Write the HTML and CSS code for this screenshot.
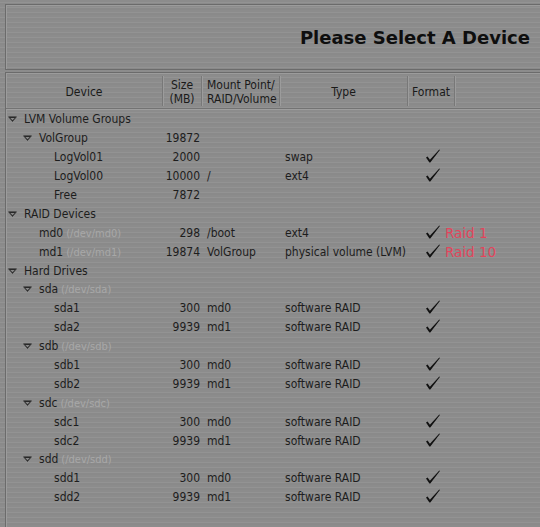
FILE: index.html
```html
<!DOCTYPE html>
<html>
<head>
<meta charset="utf-8">
<link rel="stylesheet" href="styles.css">
</head>
<body>
<div class="screen">
  <div class="title-panel">
    <h1 class="title">Please Select A Device</h1>
  </div>
  <div class="tree-panel">
    <div class="head">
      <div class="hcell">Device</div>
      <div class="hcell">Size<br>(MB)</div>
      <div class="hcell left">Mount Point/<br>RAID/Volume</div>
      <div class="hcell">Type</div>
      <div class="hcell">Format</div>
      <div class="hcell last"></div>
    </div>
    <div class="rows">
      <div class="row"><div class="dev l0"><span class="exp"><svg width="9" height="6" viewBox="0 0 9 6"><path d="M0.5 0.8 H8.5 L4.5 5.5 Z" fill="#2a2a2a" stroke="#2a2a2a" stroke-width="0.6"/><path d="M2.4 1.9 H6.6 L4.5 4.3 Z" fill="#8a8a8a"/></svg></span>LVM Volume Groups</div><div class="size"></div><div class="mnt"></div><div class="type"></div><div class="fmt"></div></div>
      <div class="row"><div class="dev l1"><span class="exp"><svg width="9" height="6" viewBox="0 0 9 6"><path d="M0.5 0.8 H8.5 L4.5 5.5 Z" fill="#2a2a2a" stroke="#2a2a2a" stroke-width="0.6"/><path d="M2.4 1.9 H6.6 L4.5 4.3 Z" fill="#8a8a8a"/></svg></span>VolGroup</div><div class="size">19872</div><div class="mnt"></div><div class="type"></div><div class="fmt"></div></div>
      <div class="row"><div class="dev l2"><span class="exp"></span>LogVol01</div><div class="size">2000</div><div class="mnt"></div><div class="type">swap</div><div class="fmt"><svg class="chk" width="16" height="14" viewBox="0 0 16 14"><path d="M1 8.4 L2.6 7.4 L4.9 10.8 L14.3 0.6 L14.9 1.1 L5.3 13.4 L4.4 13.4 Z" fill="#111"/></svg></div></div>
      <div class="row"><div class="dev l2"><span class="exp"></span>LogVol00</div><div class="size">10000</div><div class="mnt">/</div><div class="type">ext4</div><div class="fmt"><svg class="chk" width="16" height="14" viewBox="0 0 16 14"><path d="M1 8.4 L2.6 7.4 L4.9 10.8 L14.3 0.6 L14.9 1.1 L5.3 13.4 L4.4 13.4 Z" fill="#111"/></svg></div></div>
      <div class="row"><div class="dev l2"><span class="exp"></span>Free</div><div class="size">7872</div><div class="mnt"></div><div class="type"></div><div class="fmt"></div></div>
      <div class="row"><div class="dev l0"><span class="exp"><svg width="9" height="6" viewBox="0 0 9 6"><path d="M0.5 0.8 H8.5 L4.5 5.5 Z" fill="#2a2a2a" stroke="#2a2a2a" stroke-width="0.6"/><path d="M2.4 1.9 H6.6 L4.5 4.3 Z" fill="#8a8a8a"/></svg></span>RAID Devices</div><div class="size"></div><div class="mnt"></div><div class="type"></div><div class="fmt"></div></div>
      <div class="row"><div class="dev l1"><span class="exp"></span>md0<span class="path">(/dev/md0)</span></div><div class="size">298</div><div class="mnt">/boot</div><div class="type">ext4</div><div class="fmt"><svg class="chk" width="16" height="14" viewBox="0 0 16 14"><path d="M1 8.4 L2.6 7.4 L4.9 10.8 L14.3 0.6 L14.9 1.1 L5.3 13.4 L4.4 13.4 Z" fill="#111"/></svg><span class="note">Raid 1</span></div></div>
      <div class="row"><div class="dev l1"><span class="exp"></span>md1<span class="path">(/dev/md1)</span></div><div class="size">19874</div><div class="mnt">VolGroup</div><div class="type">physical volume (LVM)</div><div class="fmt"><svg class="chk" width="16" height="14" viewBox="0 0 16 14"><path d="M1 8.4 L2.6 7.4 L4.9 10.8 L14.3 0.6 L14.9 1.1 L5.3 13.4 L4.4 13.4 Z" fill="#111"/></svg><span class="note">Raid 10</span></div></div>
      <div class="row"><div class="dev l0"><span class="exp"><svg width="9" height="6" viewBox="0 0 9 6"><path d="M0.5 0.8 H8.5 L4.5 5.5 Z" fill="#2a2a2a" stroke="#2a2a2a" stroke-width="0.6"/><path d="M2.4 1.9 H6.6 L4.5 4.3 Z" fill="#8a8a8a"/></svg></span>Hard Drives</div><div class="size"></div><div class="mnt"></div><div class="type"></div><div class="fmt"></div></div>
      <div class="row"><div class="dev l1"><span class="exp"><svg width="9" height="6" viewBox="0 0 9 6"><path d="M0.5 0.8 H8.5 L4.5 5.5 Z" fill="#2a2a2a" stroke="#2a2a2a" stroke-width="0.6"/><path d="M2.4 1.9 H6.6 L4.5 4.3 Z" fill="#8a8a8a"/></svg></span>sda<span class="path">(/dev/sda)</span></div><div class="size"></div><div class="mnt"></div><div class="type"></div><div class="fmt"></div></div>
      <div class="row"><div class="dev l2"><span class="exp"></span>sda1</div><div class="size">300</div><div class="mnt">md0</div><div class="type">software RAID</div><div class="fmt"><svg class="chk" width="16" height="14" viewBox="0 0 16 14"><path d="M1 8.4 L2.6 7.4 L4.9 10.8 L14.3 0.6 L14.9 1.1 L5.3 13.4 L4.4 13.4 Z" fill="#111"/></svg></div></div>
      <div class="row"><div class="dev l2"><span class="exp"></span>sda2</div><div class="size">9939</div><div class="mnt">md1</div><div class="type">software RAID</div><div class="fmt"><svg class="chk" width="16" height="14" viewBox="0 0 16 14"><path d="M1 8.4 L2.6 7.4 L4.9 10.8 L14.3 0.6 L14.9 1.1 L5.3 13.4 L4.4 13.4 Z" fill="#111"/></svg></div></div>
      <div class="row"><div class="dev l1"><span class="exp"><svg width="9" height="6" viewBox="0 0 9 6"><path d="M0.5 0.8 H8.5 L4.5 5.5 Z" fill="#2a2a2a" stroke="#2a2a2a" stroke-width="0.6"/><path d="M2.4 1.9 H6.6 L4.5 4.3 Z" fill="#8a8a8a"/></svg></span>sdb<span class="path">(/dev/sdb)</span></div><div class="size"></div><div class="mnt"></div><div class="type"></div><div class="fmt"></div></div>
      <div class="row"><div class="dev l2"><span class="exp"></span>sdb1</div><div class="size">300</div><div class="mnt">md0</div><div class="type">software RAID</div><div class="fmt"><svg class="chk" width="16" height="14" viewBox="0 0 16 14"><path d="M1 8.4 L2.6 7.4 L4.9 10.8 L14.3 0.6 L14.9 1.1 L5.3 13.4 L4.4 13.4 Z" fill="#111"/></svg></div></div>
      <div class="row"><div class="dev l2"><span class="exp"></span>sdb2</div><div class="size">9939</div><div class="mnt">md1</div><div class="type">software RAID</div><div class="fmt"><svg class="chk" width="16" height="14" viewBox="0 0 16 14"><path d="M1 8.4 L2.6 7.4 L4.9 10.8 L14.3 0.6 L14.9 1.1 L5.3 13.4 L4.4 13.4 Z" fill="#111"/></svg></div></div>
      <div class="row"><div class="dev l1"><span class="exp"><svg width="9" height="6" viewBox="0 0 9 6"><path d="M0.5 0.8 H8.5 L4.5 5.5 Z" fill="#2a2a2a" stroke="#2a2a2a" stroke-width="0.6"/><path d="M2.4 1.9 H6.6 L4.5 4.3 Z" fill="#8a8a8a"/></svg></span>sdc<span class="path">(/dev/sdc)</span></div><div class="size"></div><div class="mnt"></div><div class="type"></div><div class="fmt"></div></div>
      <div class="row"><div class="dev l2"><span class="exp"></span>sdc1</div><div class="size">300</div><div class="mnt">md0</div><div class="type">software RAID</div><div class="fmt"><svg class="chk" width="16" height="14" viewBox="0 0 16 14"><path d="M1 8.4 L2.6 7.4 L4.9 10.8 L14.3 0.6 L14.9 1.1 L5.3 13.4 L4.4 13.4 Z" fill="#111"/></svg></div></div>
      <div class="row"><div class="dev l2"><span class="exp"></span>sdc2</div><div class="size">9939</div><div class="mnt">md1</div><div class="type">software RAID</div><div class="fmt"><svg class="chk" width="16" height="14" viewBox="0 0 16 14"><path d="M1 8.4 L2.6 7.4 L4.9 10.8 L14.3 0.6 L14.9 1.1 L5.3 13.4 L4.4 13.4 Z" fill="#111"/></svg></div></div>
      <div class="row"><div class="dev l1"><span class="exp"><svg width="9" height="6" viewBox="0 0 9 6"><path d="M0.5 0.8 H8.5 L4.5 5.5 Z" fill="#2a2a2a" stroke="#2a2a2a" stroke-width="0.6"/><path d="M2.4 1.9 H6.6 L4.5 4.3 Z" fill="#8a8a8a"/></svg></span>sdd<span class="path">(/dev/sdd)</span></div><div class="size"></div><div class="mnt"></div><div class="type"></div><div class="fmt"></div></div>
      <div class="row"><div class="dev l2"><span class="exp"></span>sdd1</div><div class="size">300</div><div class="mnt">md0</div><div class="type">software RAID</div><div class="fmt"><svg class="chk" width="16" height="14" viewBox="0 0 16 14"><path d="M1 8.4 L2.6 7.4 L4.9 10.8 L14.3 0.6 L14.9 1.1 L5.3 13.4 L4.4 13.4 Z" fill="#111"/></svg></div></div>
      <div class="row"><div class="dev l2"><span class="exp"></span>sdd2</div><div class="size">9939</div><div class="mnt">md1</div><div class="type">software RAID</div><div class="fmt"><svg class="chk" width="16" height="14" viewBox="0 0 16 14"><path d="M1 8.4 L2.6 7.4 L4.9 10.8 L14.3 0.6 L14.9 1.1 L5.3 13.4 L4.4 13.4 Z" fill="#111"/></svg></div></div>
    </div>
  </div>
</div>
</body>
</html>
```

FILE: styles.css
```css
html, body {
  margin: 0;
  padding: 0;
  width: 540px;
  height: 527px;
  overflow: hidden;
}
body {
  background-color: #8d8d8d;
  background-image: repeating-linear-gradient(to bottom, #8c8c8c 0px, #8c8c8c 2px, #939393 2px, #939393 3px, #8a8a8a 3px, #8a8a8a 5px);
  font-family: "DejaVu Sans Condensed", "DejaVu Sans", sans-serif;
  font-stretch: condensed;
  font-size: 12px;
  color: #1d1d1d;
}
.screen {
  display: flex;
  flex-direction: column;
  gap: 1px;
  padding: 4px 0 0 5px;
}
.title-panel {
  height: 64px;
  border: 1px solid #6b6b6b;
  border-right: none;
  box-shadow: inset 1px 1px 0 #9c9c9c;
  display: flex;
  align-items: center;
  justify-content: flex-end;
  padding-right: 10px;
  margin-bottom: 1px;
}
.title {
  margin: 0;
  font-family: "DejaVu Sans", sans-serif;
  font-stretch: normal;
  font-size: 18px;
  font-weight: bold;
  color: #0e0e0e;
  line-height: 22px;
  padding-top: 1px;
}
.tree-panel {
  border-top: 1px solid #6b6b6b;
  border-left: 1px solid #6b6b6b;
  box-shadow: inset 1px 1px 0 #9c9c9c;
  height: 470px;
}
.head {
  display: grid;
  grid-template-columns: 157px 39px 78px 128px 47px 1fr;
  height: 35px;
  border-bottom: 1px solid #737373;
  box-shadow: 0 1px 0 #9e9e9e;
}
.hcell {
  display: flex;
  align-items: center;
  justify-content: center;
  text-align: center;
  line-height: 14px;
  margin: 3px 0 3px;
  padding-top: 2px;
  border-right: 1px solid #787878;
  box-shadow: 1px 0 0 #9c9c9c;
  color: #1a1a1a;
}
.hcell.left {
  justify-content: flex-start;
  text-align: left;
  padding-left: 5px;
}
.hcell.last {
  border-right: none;
  box-shadow: none;
}
.rows {
  padding-top: 1px;
}
.row {
  display: grid;
  grid-template-columns: 157px 39px 78px 128px 1fr;
  height: 18.9px;
  align-items: center;
  white-space: nowrap;
}
.dev {
  display: flex;
  align-items: center;
}
.dev.l0 { padding-left: 2px; }
.dev.l1 { padding-left: 17px; }
.dev.l2 { padding-left: 32px; }
.exp {
  width: 16px;
  flex: none;
  display: flex;
  align-items: center;
}
.exp svg {
  display: block;
}
.path {
  font-size: 11px;
  color: #a8a8a8;
  margin-left: 3px;
  padding-top: 1px;
}
.size {
  text-align: right;
  padding-right: 2px;
}
.mnt {
  padding-left: 5px;
}
.type {
  padding-left: 5px;
}
.fmt {
  display: flex;
  align-items: center;
  padding-left: 17px;
}
.chk {
  display: block;
  flex: none;
  margin-top: -2px;
}
.note {
  margin-left: 4px;
  font-family: "DejaVu Sans", sans-serif;
  font-stretch: normal;
  font-size: 13.5px;
  color: #e2455c;
}
```
